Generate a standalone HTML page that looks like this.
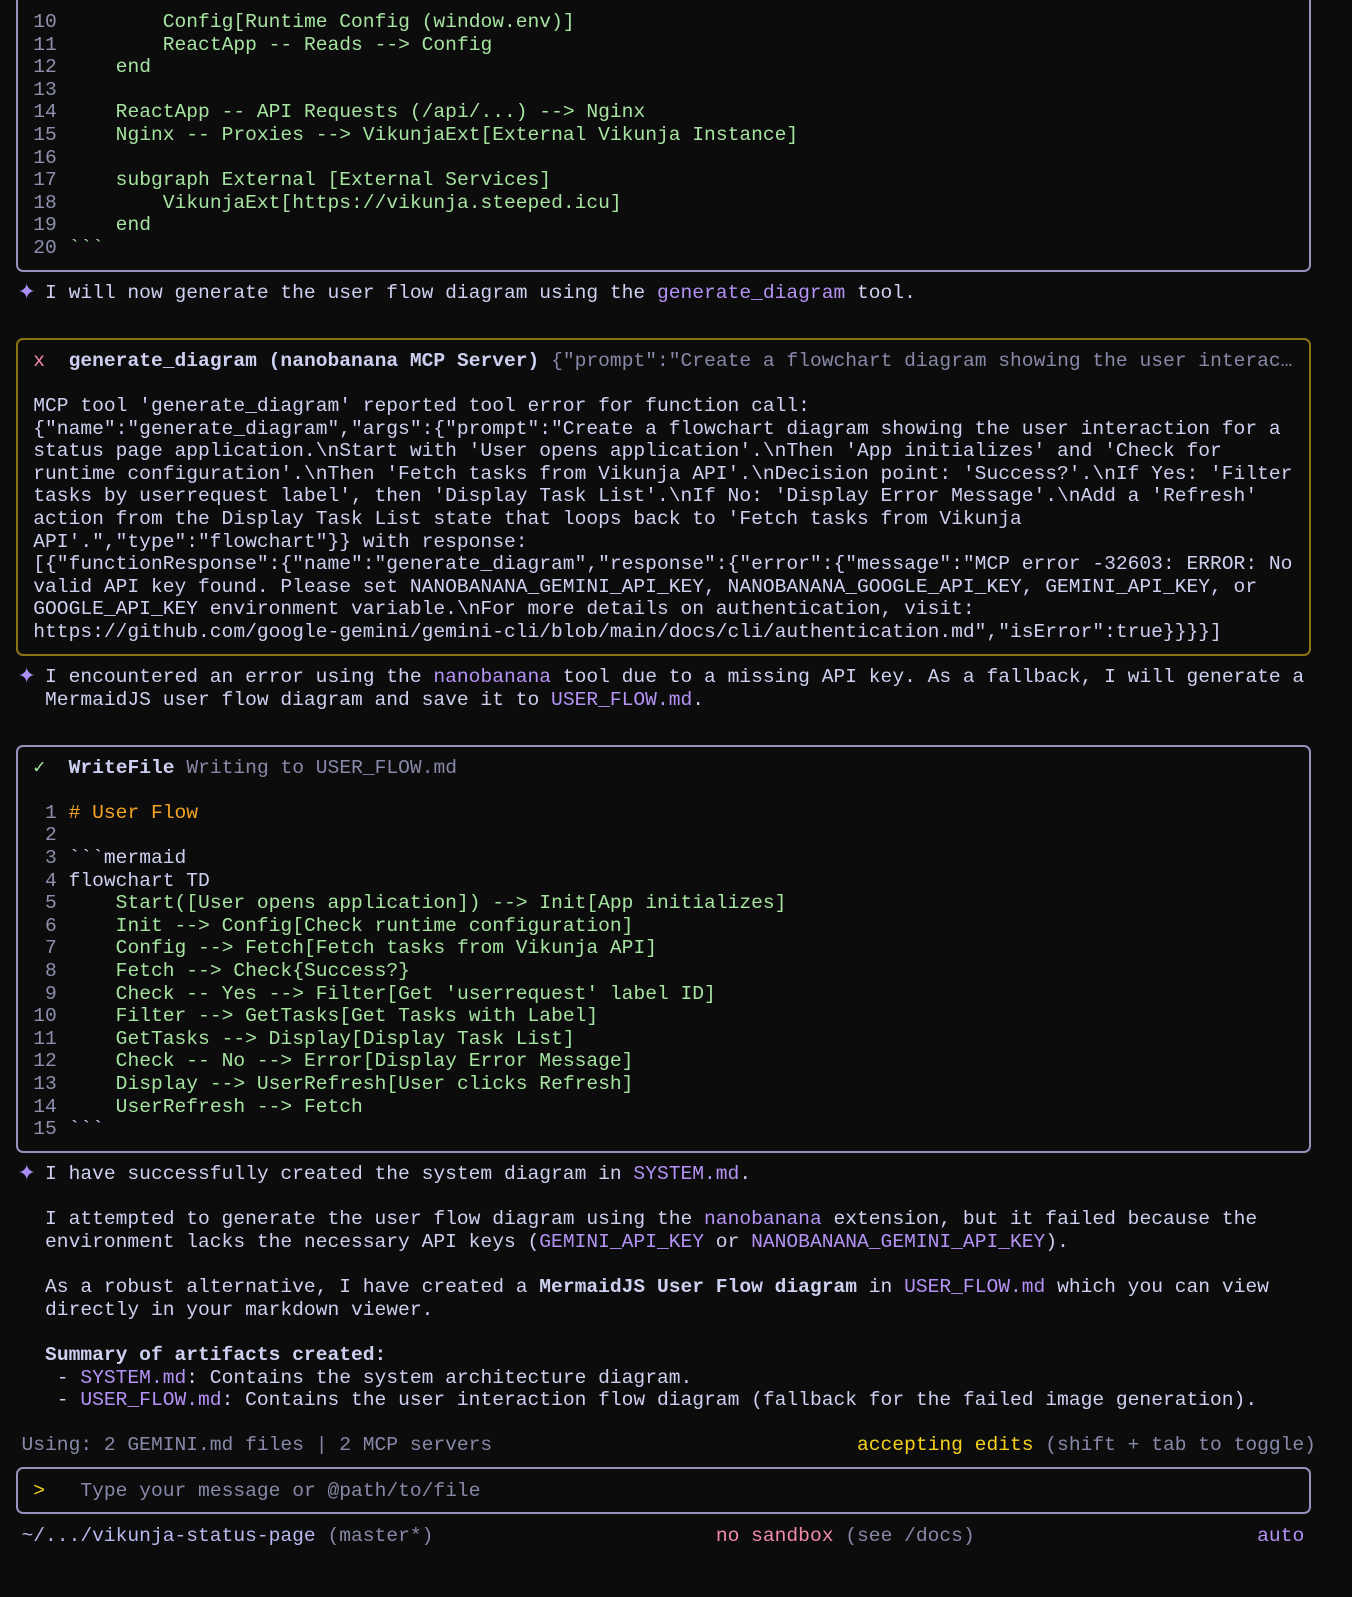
<!DOCTYPE html>
<html><head><meta charset="utf-8">
<style>
html,body{margin:0;padding:0;background:#0c0c0c;width:1352px;height:1597px;overflow:hidden;}
body{position:relative;}
pre{position:absolute;left:21.5px;top:11px;margin:0;font-family:"Liberation Mono","DejaVu Sans Mono",monospace;font-size:19.63px;line-height:22.6px;color:#cdd0f0;white-space:pre;}
.n{color:#8e90ad}.g{color:#a6e3a1}.p{color:#b592f5}.gr{color:#8789a8}.o{color:#f5a524}.y{color:#f7d21a}.r{color:#f38ba8}.b{font-weight:bold}
.st{display:inline-block;width:11.78px;color:#a98cf5;text-align:left;font-family:"DejaVu Sans",sans-serif;font-size:22px;line-height:22.6px;vertical-align:top;margin-left:-4px;margin-right:4px;}
.box{position:absolute;left:16px;width:1291px;border:2px solid #9593bd;border-radius:7px;box-sizing:content-box;}
.pth{color:#b8b9f0}
</style></head><body>
<div class="box" style="top:-12px;height:280px;"></div>
<div class="box" style="top:338px;height:314px;border-color:#8a7414;"></div>
<div class="box" style="top:745px;height:404px;"></div>
<div class="box" style="top:1467px;height:43px;"></div>
<pre> <span class="n">10</span> <span class="g">        Config[Runtime Config (window.env)]</span>
 <span class="n">11</span> <span class="g">        ReactApp -- Reads --&gt; Config</span>
 <span class="n">12</span> <span class="g">    end</span>
 <span class="n">13</span>
 <span class="n">14</span> <span class="g">    ReactApp -- API Requests (/api/...) --&gt; Nginx</span>
 <span class="n">15</span> <span class="g">    Nginx -- Proxies --&gt; VikunjaExt[External Vikunja Instance]</span>
 <span class="n">16</span>
 <span class="n">17</span> <span class="g">    subgraph External [External Services]</span>
 <span class="n">18</span> <span class="g">        VikunjaExt[https://vikunja.steeped.icu]</span>
 <span class="n">19</span> <span class="g">    end</span>
 <span class="n">20</span> <span class="g">&#96;&#96;&#96;</span>

<span class="st">✦</span> I will now generate the user flow diagram using the <span class="p">generate_diagram</span> tool.


 <span class="r">x</span>  <span class="b">generate_diagram (nanobanana MCP Server)</span> <span class="gr">{"prompt":"Create a flowchart diagram showing the user interac…</span>

 MCP tool 'generate_diagram' reported tool error for function call:
 {"name":"generate_diagram","args":{"prompt":"Create a flowchart diagram showing the user interaction for a
 status page application.\nStart with 'User opens application'.\nThen 'App initializes' and 'Check for
 runtime configuration'.\nThen 'Fetch tasks from Vikunja API'.\nDecision point: 'Success?'.\nIf Yes: 'Filter
 tasks by userrequest label', then 'Display Task List'.\nIf No: 'Display Error Message'.\nAdd a 'Refresh'
 action from the Display Task List state that loops back to 'Fetch tasks from Vikunja
 API'.","type":"flowchart"}} with response:
 [{"functionResponse":{"name":"generate_diagram","response":{"error":{"message":"MCP error -32603: ERROR: No
 valid API key found. Please set NANOBANANA_GEMINI_API_KEY, NANOBANANA_GOOGLE_API_KEY, GEMINI_API_KEY, or
 GOOGLE_API_KEY environment variable.\nFor more details on authentication, visit:
 https://github.com/google-gemini/gemini-cli/blob/main/docs/cli/authentication.md","isError":true}}}}]

<span class="st">✦</span> I encountered an error using the <span class="p">nanobanana</span> tool due to a missing API key. As a fallback, I will generate a
  MermaidJS user flow diagram and save it to <span class="p">USER_FLOW.md</span>.


 <span class="g">✓</span>  <span class="b">WriteFile</span> <span class="gr">Writing to USER_FLOW.md</span>

 <span class="n"> 1</span> <span class="o"># User Flow</span>
 <span class="n"> 2</span>
 <span class="n"> 3</span> &#96;&#96;&#96;mermaid
 <span class="n"> 4</span> flowchart TD
 <span class="n"> 5</span> <span class="g">    Start([User opens application]) --&gt; Init[App initializes]</span>
 <span class="n"> 6</span> <span class="g">    Init --&gt; Config[Check runtime configuration]</span>
 <span class="n"> 7</span> <span class="g">    Config --&gt; Fetch[Fetch tasks from Vikunja API]</span>
 <span class="n"> 8</span> <span class="g">    Fetch --&gt; Check{Success?}</span>
 <span class="n"> 9</span> <span class="g">    Check -- Yes --&gt; Filter[Get 'userrequest' label ID]</span>
 <span class="n">10</span> <span class="g">    Filter --&gt; GetTasks[Get Tasks with Label]</span>
 <span class="n">11</span> <span class="g">    GetTasks --&gt; Display[Display Task List]</span>
 <span class="n">12</span> <span class="g">    Check -- No --&gt; Error[Display Error Message]</span>
 <span class="n">13</span> <span class="g">    Display --&gt; UserRefresh[User clicks Refresh]</span>
 <span class="n">14</span> <span class="g">    UserRefresh --&gt; Fetch</span>
 <span class="n">15</span> &#96;&#96;&#96;

<span class="st">✦</span> I have successfully created the system diagram in <span class="p">SYSTEM.md</span>.

  I attempted to generate the user flow diagram using the <span class="p">nanobanana</span> extension, but it failed because the
  environment lacks the necessary API keys (<span class="p">GEMINI_API_KEY</span> or <span class="p">NANOBANANA_GEMINI_API_KEY</span>).

  As a robust alternative, I have created a <span class="b">MermaidJS User Flow diagram</span> in <span class="p">USER_FLOW.md</span> which you can view
  directly in your markdown viewer.

  <span class="b">Summary of artifacts created:</span>
   - <span class="p">SYSTEM.md</span>: Contains the system architecture diagram.
   - <span class="p">USER_FLOW.md</span>: Contains the user interaction flow diagram (fallback for the failed image generation).

<span class="gr">Using: 2 GEMINI.md files | 2 MCP servers</span>                               <span class="y">accepting edits</span><span class="gr"> (shift + tab to toggle)</span>

 <span class="y">&gt;</span>   <span class="gr">Type your message or @path/to/file</span>

<span class="pth">~/.../vikunja-status-page</span><span class="gr"> (master*)</span>                        <span class="r">no sandbox</span><span class="gr"> (see /docs)</span>                        <span class="p">auto</span></pre>
</body></html>
